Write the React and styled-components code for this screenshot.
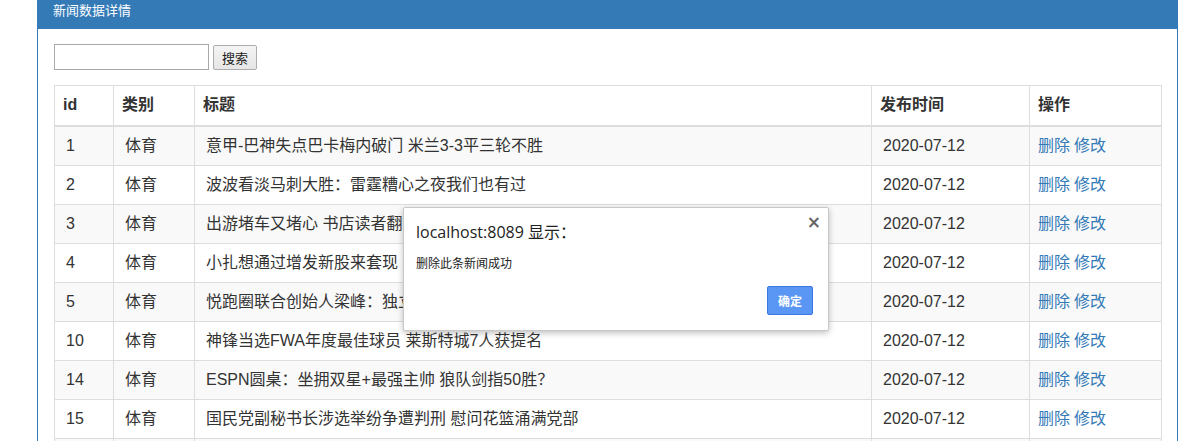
import React from 'react'
import styled, { createGlobalStyle } from 'styled-components'

const GlobalStyle = createGlobalStyle`
    html, body {
        margin: 0;
        padding: 0;
        background: #fff;
        overflow: hidden;
    }
    body {
        font-family: "Liberation Sans", Arial, "Noto Sans CJK SC", sans-serif;
        color: #333;
    }
`

const PageStyled = styled.div`
    position: relative;
    width: 1182px;
    height: 441px;
    overflow: hidden;
    padding-left: 37px;
    box-sizing: border-box;
`

const PanelStyled = styled.div`
    width: 1141px;
    border: 1px solid #337ab7;
    border-top: none;
    box-sizing: border-box;
    background: #fff;
`

const PanelHeadingStyled = styled.div`
    height: 29px;
    background: #337ab7;
    color: #fff;
    font-size: 13px;
    line-height: 21px;
    padding: 0 16px;
    margin: 0 -1px;
`

const PanelBodyStyled = styled.div`
    padding: 15px 15px 0 16px;
`

const SearchFormStyled = styled.form`
    display: flex;
    align-items: center;
    gap: 4px;
    margin-bottom: 15px;
`

const SearchInputStyled = styled.input`
    width: 155px;
    height: 26px;
    box-sizing: border-box;
    border: 1px solid #a9a9a9;
    padding: 2px 4px;
    font-size: 13px;
    margin: 0;
`

const SearchButtonStyled = styled.button`
    height: 25px;
    width: 44px;
    box-sizing: border-box;
    border: 1px solid #adadad;
    border-radius: 2px;
    background: linear-gradient(#f4f4f4, #e6e6e6);
    font-family: "Liberation Sans", "Noto Sans CJK SC", sans-serif;
    font-size: 13px;
    color: #222;
    padding: 0;
    margin-top: 1px;
`

const TableStyled = styled.table`
    width: 1107px;
    border-collapse: collapse;
    border: 1px solid #ddd;
    font-size: 16px;
    table-layout: fixed;
`

const HeadCellStyled = styled.th`
    text-align: left;
    font-weight: bold;
    padding: 8px 8px 9px 8px;
    line-height: 22px;
    border: 1px solid #ddd;
    border-bottom: 2px solid #ddd;
    color: #333;
`

const RowStyled = styled.tr`
    background: ${p => (p.$striped ? '#f9f9f9' : '#fff')};
`

const CellStyled = styled.td`
    padding: 8px 8px 8px ${p => (p.$tight ? '8px' : '11px')};
    line-height: 22px;
    border: 1px solid #ddd;
    white-space: nowrap;
    overflow: hidden;
`

const LinkStyled = styled.a`
    color: #337ab7;
    text-decoration: none;
    margin-right: 4px;
`

const DialogStyled = styled.div`
    position: absolute;
    left: 403px;
    top: 207px;
    width: 426px;
    height: 124px;
    box-sizing: border-box;
    background: #fff;
    border: 1px solid #c8c8c8;
    border-radius: 2px;
    box-shadow: 0 2px 6px rgba(0, 0, 0, 0.25);
    padding: 13px 15px 15px 12px;
    display: flex;
    flex-direction: column;
`

const DialogTitleStyled = styled.div`
    font-family: "Open Sans", "Noto Sans CJK SC", sans-serif;
    font-size: 16px;
    color: #222;
    line-height: 22px;
`

const DialogCloseStyled = styled.span`
    position: absolute;
    right: 7px;
    top: 4px;
    font-size: 17px;
    font-weight: bold;
    color: #666;
    font-family: "DejaVu Sans", sans-serif;
`

const DialogMessageStyled = styled.div`
    font-size: 12px;
    color: #222;
    margin-top: 13px;
    line-height: 16px;
`

const DialogFooterStyled = styled.div`
    display: flex;
    justify-content: flex-end;
    margin-top: auto;
`

const DialogButtonStyled = styled.button`
    width: 46px;
    height: 29px;
    box-sizing: border-box;
    background: #5a97f5;
    border: 1px solid #3b78e7;
    border-radius: 2px;
    color: #fff;
    font-size: 12px;
    font-weight: bold;
    font-family: "Liberation Sans", "Noto Sans CJK SC", sans-serif;
    padding: 0;
`

const news = [
    { id: 1, title: '意甲-巴神失点巴卡梅内破门 米兰3-3平三轮不胜' },
    { id: 2, title: '波波看淡马刺大胜：雷霆糟心之夜我们也有过' },
    { id: 3, title: '出游堵车又堵心 书店读者翻阅图书的好去处' },
    { id: 4, title: '小扎想通过增发新股来套现 巩固控制权' },
    { id: 5, title: '悦跑圈联合创始人梁峰：独立思考做产品' },
    { id: 10, title: '神锋当选FWA年度最佳球员 莱斯特城7人获提名' },
    { id: 14, title: 'ESPN圆桌：坐拥双星+最强主帅 狼队剑指50胜？' },
    { id: 15, title: '国民党副秘书长涉选举纷争遭判刑 慰问花篮涌满党部' },
    { id: 16, title: '国足出征在即 主帅公布最终名单' },
]

export default function App() {
    return (
        <PageStyled>
            <GlobalStyle />
            <PanelStyled>
                <PanelHeadingStyled>新闻数据详情</PanelHeadingStyled>
                <PanelBodyStyled>
                    <SearchFormStyled onSubmit={e => e.preventDefault()}>
                        <SearchInputStyled type="text" />
                        <SearchButtonStyled type="submit">搜索</SearchButtonStyled>
                    </SearchFormStyled>
                    <TableStyled>
                        <colgroup>
                            <col style={{ width: 59 }} />
                            <col style={{ width: 81 }} />
                            <col style={{ width: 677 }} />
                            <col style={{ width: 158 }} />
                            <col style={{ width: 132 }} />
                        </colgroup>
                        <thead>
                            <tr>
                                <HeadCellStyled>id</HeadCellStyled>
                                <HeadCellStyled>类别</HeadCellStyled>
                                <HeadCellStyled>标题</HeadCellStyled>
                                <HeadCellStyled>发布时间</HeadCellStyled>
                                <HeadCellStyled>操作</HeadCellStyled>
                            </tr>
                        </thead>
                        <tbody>
                            {news.map((item, i) => (
                                <RowStyled key={item.id} $striped={i % 2 === 0}>
                                    <CellStyled>{item.id}</CellStyled>
                                    <CellStyled>体育</CellStyled>
                                    <CellStyled>{item.title}</CellStyled>
                                    <CellStyled>2020-07-12</CellStyled>
                                    <CellStyled $tight>
                                        <LinkStyled href="#">删除</LinkStyled>
                                        <LinkStyled href="#">修改</LinkStyled>
                                    </CellStyled>
                                </RowStyled>
                            ))}
                        </tbody>
                    </TableStyled>
                </PanelBodyStyled>
            </PanelStyled>
            <DialogStyled>
                <DialogCloseStyled>×</DialogCloseStyled>
                <DialogTitleStyled>localhost:8089 显示：</DialogTitleStyled>
                <DialogMessageStyled>删除此条新闻成功</DialogMessageStyled>
                <DialogFooterStyled>
                    <DialogButtonStyled>确定</DialogButtonStyled>
                </DialogFooterStyled>
            </DialogStyled>
        </PageStyled>
    )
}
